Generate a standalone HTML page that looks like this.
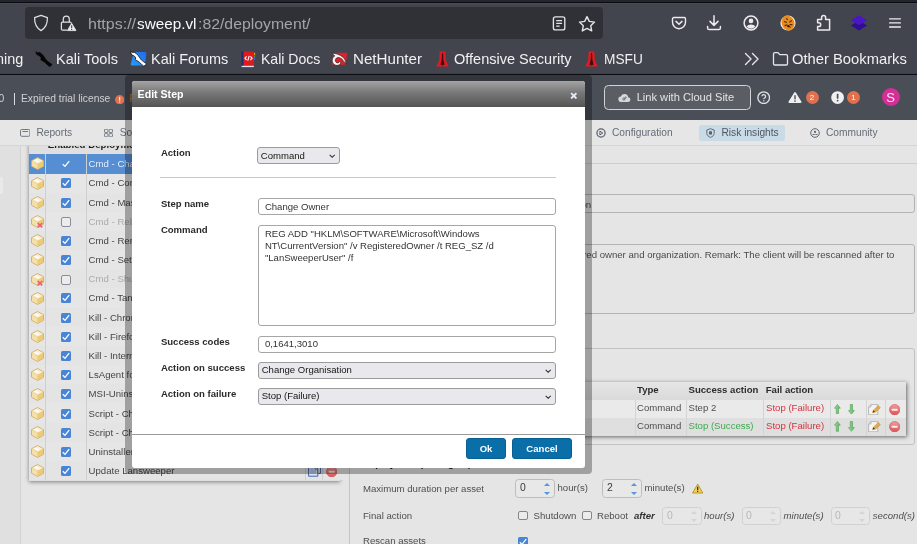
<!DOCTYPE html>
<html lang="en">
<head>
<meta charset="utf-8">
<title>Edit Step</title>
<style>
*{box-sizing:border-box;margin:0;padding:0}
html,body{width:917px;height:544px;overflow:hidden;background:#e5e5e5;font-family:"Liberation Sans",sans-serif;}
.a{position:absolute;white-space:nowrap}
#chrome{left:0;top:0;width:917px;height:75px;background:linear-gradient(#42454d 73px,#383b42 74px)}
#topstrip{left:0;top:0;width:917px;height:4px;background:linear-gradient(#23252e 0,#23252e 1.9px,#0a0b0f 2px,#0a0b0f 3px,#494c55 3px,#494c55 4px)}
#chromeline{left:0;top:74px;width:917px;height:1px;background:#0c0d11}
#urlbar{left:25px;top:7px;width:578px;height:32px;background:#303136;border-radius:4px}
.bm{color:#f1f1f3;font-size:15px;line-height:20px;top:49px;display:inline-block;transform-origin:0 0}
.url{font-size:15.5px;line-height:20px;top:13.5px;display:inline-block;transform-origin:0 0}
#hdr{left:0;top:75px;width:917px;height:45px;background:#4a4e56}
#nav{left:0;top:120px;width:917px;height:26px;background:#e6e6e6;border-bottom:1px solid #d6d6d6}
.nv{font-size:10.2px;color:#656c77;top:126.4px;line-height:14px}
.hd{font-size:10.3px;line-height:14px;top:92px;color:#d0d1d5}
.inpd{border:1px solid #b3b3b3;border-radius:3px;background:#e5e5e5}
.t10d{font-size:9.6px;line-height:12px;color:#4a4a4a}
.vs{top:399.5px;width:1px;height:36.5px;background:#d4d4d4}
.th{font-size:9.6px;font-weight:bold;color:#2c2c2c;top:384px;line-height:12px}
.td{font-size:9.6px;color:#4f4f4f;line-height:12px}
.num{width:39.4px;height:19px;border:1px solid #bdbdbd;border-radius:3.5px;background:#e8e8e8}
.num::before{content:"";position:absolute;right:3.6px;top:3.4px;border:3px solid transparent;border-bottom:3.4px solid #5596dc;border-top:0}
.num::after{content:"";position:absolute;right:3.6px;bottom:2.4px;border:3px solid transparent;border-top:3.4px solid #5596dc;border-bottom:0}
.num.dis{border-color:#d0d0d0;background:#e7e7e7;height:17.6px}
.num.dis::before{top:3px}.num.dis::after{bottom:2.2px}
.num.dis::before{border-bottom-color:#d0d6e0}.num.dis::after{border-top-color:#d0d6e0}
.cb{width:9.6px;height:9.6px;border:1px solid #85858f;border-radius:2px;background:#ececec}
/* left table */
.row{left:29px;width:321px;height:19.2px}
.cell{top:0;height:100%}
.t11{font-size:9.6px;color:#454545}
/* dialog */
#shadow{z-index:5;left:125px;top:75px;width:467px;height:399px;background:rgba(0,0,0,.3);border-radius:4px}
#dlg{z-index:6;left:132px;top:81px;width:453px;height:387px;background:#fff;border-radius:3px;overflow:hidden}
#dtitle{left:0;top:0;width:453px;height:26px;background:linear-gradient(#a4a4a4,#777 45%,#555);}
.lbl{font-size:9.55px;font-weight:bold;color:#2a2a2a;line-height:12px}
.it{font-size:9.55px;color:#333;line-height:12px}
.st{font-size:9.55px;color:#151515;line-height:12px}
.inp{border:1px solid #a6a6a6;border-radius:3px;background:#fff;font-size:10px;color:#222}
.sel{border:1px solid #9b9b9b;border-radius:3px;background:#e9e9ed;font-size:10px;color:#111}
.btn{background:#0a6ea9;border:1px solid #085f92;border-radius:3px;color:#fff;font-weight:bold;font-size:9.55px;text-align:center;line-height:20.4px;height:20.8px}
</style>
</head>
<body>
<div id="root" style="position:absolute;left:0;top:0;width:917px;height:544px;will-change:transform">
<!-- ===== browser chrome ===== -->
<div class="a" id="chrome"></div>
<div class="a" id="topstrip"></div>
<div class="a" id="urlbar"></div>
<div class="a" id="chromeline"></div>
<!-- shield -->
<svg class="a" style="left:33px;top:14px" width="16" height="18" viewBox="0 0 16 18"><path d="M8 1.4 L14.4 3.6 C14.6 9.5 12.6 14 8 16.6 C3.4 14 1.4 9.5 1.6 3.6 Z" fill="none" stroke="#dedee3" stroke-width="1.25" stroke-linejoin="round"/></svg>
<!-- lock with warning -->
<svg class="a" style="left:60px;top:14px" width="18" height="18" viewBox="0 0 18 18"><path d="M3.3 8 V5 a3 3 0 0 1 6 0 V8" fill="none" stroke="#dedee3" stroke-width="1.25"/><path d="M7 16.2 H2.6 a1.2 1.2 0 0 1 -1.2 -1.2 V9.2 a1.2 1.2 0 0 1 1.2 -1.2 H10 a1.2 1.2 0 0 1 1.2 1.2" fill="none" stroke="#dedee3" stroke-width="1.25"/><path d="M11.7 9.3 L16 16.6 H7.4 Z" fill="#ededf0" stroke="#ededf0" stroke-width="0.8" stroke-linejoin="round"/><rect x="11.2" y="11.3" width="1" height="3" fill="#303136"/><rect x="11.2" y="15" width="1" height="1" fill="#303136"/></svg>
<span class="a url" id="u1" style="left:88px;transform:scaleX(1.0323);color:#a3a3ab">https://</span>
<span class="a url" id="u2" style="left:137.4px;transform:scaleX(0.9867);color:#fbfbfe">sweep.vl</span>
<span class="a url" id="u3" style="left:197.8px;transform:scaleX(1.0199);color:#a3a3ab">:82/deployment/</span>
<!-- reader -->
<svg class="a" style="left:551px;top:14px" width="16" height="18" viewBox="0 0 16 18"><rect x="2.4" y="2.9" width="11.4" height="13" rx="2" fill="none" stroke="#e4e4e8" stroke-width="1.35"/><path d="M5.2 6.7 H11 M5.2 9.4 H11 M5.2 12.1 H8.6" stroke="#e4e4e8" stroke-width="1.2"/></svg>
<!-- star -->
<svg class="a" style="left:578px;top:14.6px" width="18" height="18" viewBox="0 0 18 18"><path d="M9 1.6 L11.3 6.4 L16.5 7.1 L12.7 10.7 L13.7 15.9 L9 13.4 L4.3 15.9 L5.3 10.7 L1.5 7.1 L6.7 6.4 Z" fill="none" stroke="#e4e4e8" stroke-width="1.4" stroke-linejoin="round"/></svg>
<!-- pocket -->
<svg class="a" style="left:670px;top:14.2px" width="18" height="18" viewBox="0 0 18 18"><path d="M3.8 3.5 H14.2 a1.3 1.3 0 0 1 1.3 1.3 V8.2 a6.5 6.5 0 0 1 -13 0 V4.8 A1.3 1.3 0 0 1 3.8 3.5 Z" fill="none" stroke="#ececf0" stroke-width="1.4"/><path d="M6 7.4 L9 10.2 L12 7.4" fill="none" stroke="#ececf0" stroke-width="1.5" stroke-linecap="round" stroke-linejoin="round"/></svg>
<!-- download -->
<svg class="a" style="left:705.2px;top:13.6px" width="18" height="18" viewBox="0 0 18 18"><path d="M9 1.8 V11 M5 7.4 L9 11.4 L13 7.4" fill="none" stroke="#ececf0" stroke-width="1.5" stroke-linecap="round" stroke-linejoin="round"/><path d="M2.6 12.6 V14 a1.6 1.6 0 0 0 1.6 1.6 H13.8 a1.6 1.6 0 0 0 1.6 -1.6 V12.6" fill="none" stroke="#ececf0" stroke-width="1.5" stroke-linecap="round"/></svg>
<!-- account -->
<svg class="a" style="left:742.4px;top:14.4px" width="18" height="18" viewBox="0 0 18 18"><circle cx="9" cy="9" r="6.9" fill="none" stroke="#ececf0" stroke-width="1.5"/><circle cx="9" cy="6.9" r="2.3" fill="#ececf0"/><path d="M4.6 12.6 a4.8 3.4 0 0 1 8.8 0 a5.6 5.6 0 0 1 -8.8 0 Z" fill="#ececf0"/></svg>
<!-- tiger / fox extension -->
<svg class="a" style="left:779.6px;top:15.4px" width="16" height="16" viewBox="0 0 16 16"><circle cx="8" cy="8" r="7.6" fill="#f2e6d6"/><path d="M8 .4 A7.6 7.6 0 0 1 8 15.6 A7.6 7.6 0 0 1 8 .4 Z" fill="#e98a1c" transform="rotate(-20 8 8) scale(.82 1) translate(1.75 0)"/><path d="M4 6.4 L7 7.6 M12 5.4 L9.4 7.2 M4.6 10.6 L7.4 9.8 M12.4 9.6 L9.6 9.6 M6.4 3.4 L7.6 5 M10.4 12.6 L9.2 11.2" stroke="#4a2a10" stroke-width="1.1"/><circle cx="8.2" cy="11.2" r="1.1" fill="#2b1708"/></svg>
<!-- puzzle -->
<svg class="a" style="left:815px;top:13.4px" width="18" height="19" viewBox="0 0 18 19"><path d="M2.6 6.6 H6.6 V4.6 a2 2 0 0 1 4 0 V6.6 H14.6 V17 H2.6 V13.6 H3.8 a1.9 1.9 0 0 0 0 -3.8 H2.6 Z" fill="none" stroke="#ececf0" stroke-width="1.5" stroke-linejoin="round"/></svg>
<!-- purple layers -->
<svg class="a" style="left:849px;top:13px" width="20" height="20" viewBox="0 0 20 20"><path d="M10 7.5 L18 12.4 L10 17.4 L2 12.4 Z" fill="#2d0f8f"/><path d="M10 2.2 L18 7.2 L10 12.2 L2 7.2 Z" fill="#4a16c8"/></svg>
<!-- hamburger -->
<svg class="a" style="left:887px;top:15px" width="16" height="16" viewBox="0 0 16 16"><path d="M2.6 3.8 H13.4 M2.6 7.9 H13.4 M2.6 12 H13.4" stroke="#ececf0" stroke-width="1.35" stroke-linecap="round"/></svg>

<span class="a bm" id="b0" style="left:-4px;transform:scaleX(0.9613)">ning</span>
<span class="a bm" id="b1" style="left:56.3px;transform:scaleX(0.9687)">Kali Tools</span>
<span class="a bm" id="b2" style="left:151px;transform:scaleX(0.9650)">Kali Forums</span>
<span class="a bm" id="b3" style="left:260.5px;transform:scaleX(0.9369)">Kali Docs</span>
<span class="a bm" id="b4" style="left:352.7px;transform:scaleX(1.0088)">NetHunter</span>
<span class="a bm" id="b5" style="left:454.3px;transform:scaleX(0.9679)">Offensive Security</span>
<span class="a bm" id="b6" style="left:603.9px;transform:scaleX(0.9129)">MSFU</span>
<span class="a bm" id="b7" style="left:792.4px;transform:scaleX(0.9837)">Other Bookmarks</span>
<!-- bookmark icons -->
<svg class="a" style="left:35px;top:50px" width="18" height="18" viewBox="0 0 18 18"><path d="M.7 .9 L2.4 2.4 L4.3 2.1 L6.3 3.3 L8.6 5.6 L10.2 8 L12 10.4 L14.4 12.3 L17.2 14.2 L16.3 16 L14.2 16.8 L12.2 15 L9.6 12.6 L7.3 11.1 L5.2 9.7 L6 8.1 L4.5 6.2 L2.7 5.3 L1 4.2 Z" fill="#050506" stroke="#2a2b30" stroke-width=".3"/></svg>
<svg class="a" style="left:130px;top:50px" width="18" height="18" viewBox="0 0 18 18"><defs><linearGradient id="kf" x1="0" y1="1" x2="1" y2="0"><stop offset="0" stop-color="#2b9cf6"/><stop offset="1" stop-color="#1d6bef"/></linearGradient></defs><path d="M5.2 1.9 H15.2 a1.2 1.2 0 0 1 1.2 1.4 L15 14.2 a1.4 1.4 0 0 1 -1.4 1.2 H2 a1.2 1.2 0 0 1 -1.2 -1.5 L3.6 3.1 A1.6 1.6 0 0 1 5.2 1.9 Z" fill="url(#kf)"/><g transform="translate(.2 .3) scale(.94)"><path d="M.7 .9 L2.4 2.4 L4.3 2.1 L6.3 3.3 L8.6 5.6 L10.2 8 L12 10.4 L14.4 12.3 L17.2 14.2 L16.3 16 L14.2 16.8 L12.2 15 L9.6 12.6 L7.3 11.1 L5.2 9.7 L6 8.1 L4.5 6.2 L2.7 5.3 L1 4.2 Z" fill="#fff" stroke="#15161a" stroke-width=".9" stroke-linejoin="round"/></g></svg>
<svg class="a" style="left:241.4px;top:50.6px" width="15" height="17" viewBox="0 0 15 17"><rect x=".4" y=".4" width="12.6" height="15.6" rx="1" fill="#e0191d"/><rect x=".4" y=".4" width="2" height="15.2" fill="#1d2a6e"/><rect x=".6" y="14.8" width="12.2" height="1.3" fill="#e6e3f2"/><rect x="13" y="1.8" width="1.2" height="2.2" fill="#f08a1c"/><rect x="13" y="4.4" width="1.2" height="2.2" fill="#3c9a4a"/><rect x="13" y="7" width="1.2" height="2.2" fill="#2e62d8"/><path d="M5.6 5.4 L3.9 7.2 L5.6 9 M9.4 5.4 L11.1 7.2 L9.4 9 M8.2 4.8 L6.8 9.6" fill="none" stroke="#fff" stroke-width="1.1"/></svg>
<svg class="a" style="left:331.4px;top:51.6px" width="17" height="15" viewBox="0 0 17 15"><path d="M4.2 .7 H15 a1.2 1.2 0 0 1 1.2 1.4 L14.8 11.6 a1.4 1.4 0 0 1 -1.4 1.2 H2 a1.2 1.2 0 0 1 -1.2 -1.5 L2.8 1.9 A1.5 1.5 0 0 1 4.2 .7 Z" fill="#d9222b"/><path d="M1 1.2 C5.5 1.4 10.5 3 13.6 7 L15.4 11.6 L12.6 9.4 C11.4 6.6 8.6 5.2 6.6 5.6 C4.4 6 3.6 8.6 5 10.2 C6.2 11.4 8 11 8.4 9.6 L9.8 10.8 C9 13.4 5.6 14.2 3.2 12.4 C.4 10.2 .6 5.6 3.8 4 C2.6 2.8 1.8 2 1 1.2 Z" fill="#f4f4f4" stroke="#2a1416" stroke-width=".6" stroke-linejoin="round"/></svg>
<svg class="a" style="left:435.6px;top:51.4px" width="13" height="16" viewBox="0 0 13 16"><path d="M3.6 .6 H9.4 L9.8 9.4 L12.8 15.4 H.2 L3.2 9.4 Z" fill="#e01b24"/><path d="M6 2 L7.1 2.2 L7.4 9 L8.6 13.6 L6.5 14.6 L4.4 13.6 L5.6 9 Z" fill="#4a0a0e"/></svg>
<svg class="a" style="left:585px;top:51.4px" width="13" height="16" viewBox="0 0 13 16"><path d="M3.6 .6 H9.4 L9.8 9.4 L12.8 15.4 H.2 L3.2 9.4 Z" fill="#e01b24"/><path d="M6 2 L7.1 2.2 L7.4 9 L8.6 13.6 L6.5 14.6 L4.4 13.6 L5.6 9 Z" fill="#4a0a0e"/></svg>
<!-- chevrons -->
<svg class="a" style="left:744px;top:52px" width="16" height="14" viewBox="0 0 16 14"><path d="M1.5 1.5 L7 7 L1.5 12.5 M8.5 1.5 L14 7 L8.5 12.5" fill="none" stroke="#e6e6ea" stroke-width="1.4" stroke-linecap="round" stroke-linejoin="round"/></svg>
<!-- folder -->
<svg class="a" style="left:772px;top:51px" width="17" height="16" viewBox="0 0 17 16"><path d="M1.5 3 a1.3 1.3 0 0 1 1.3 -1.3 H6 L7.8 3.6 H14.2 a1.3 1.3 0 0 1 1.3 1.3 V12.7 a1.3 1.3 0 0 1 -1.3 1.3 H2.8 a1.3 1.3 0 0 1 -1.3 -1.3 Z" fill="none" stroke="#e6e6ea" stroke-width="1.3" stroke-linejoin="round"/></svg>

<!-- ===== page header ===== -->
<svg width="0" height="0" style="position:absolute"><defs><linearGradient id="gb" x1="0" y1="0" x2="1" y2="1"><stop offset="0" stop-color="#f6e8c0"/><stop offset=".55" stop-color="#eed597"/><stop offset="1" stop-color="#dfb965"/></linearGradient><linearGradient id="gg" x1="0" y1="0" x2="1" y2="0"><stop offset="0" stop-color="#a8dba4"/><stop offset="1" stop-color="#5cb45c"/></linearGradient><linearGradient id="gr" x1="0" y1="0" x2="0" y2="1"><stop offset="0" stop-color="#f09c9c"/><stop offset="1" stop-color="#dc5257"/></linearGradient></defs></svg>
<div class="a" id="hdr"></div>
<span class="a hd" style="left:-1.5px">0</span>
<div class="a" style="left:13.8px;top:93px;width:1.2px;height:12px;background:#d9dadd"></div>
<span class="a hd" id="h1" style="left:21px">Expired trial license</span>
<svg class="a" style="left:114.8px;top:94.8px" width="9.4" height="9.4" viewBox="0 0 10 10"><circle cx="5" cy="5" r="5" fill="#e0714f"/><rect x="4.45" y="2" width="1.1" height="3.9" fill="#fff"/><rect x="4.45" y="6.8" width="1.1" height="1.2" fill="#fff"/></svg>
<span class="a hd" style="left:129.5px;color:#d8892b">Please contact sales</span>
<!-- link with cloud site -->
<div class="a" style="left:604px;top:85px;width:147px;height:25px;border:1px solid #d2d3d6;border-radius:4.5px;background:#5a5d63"></div>
<svg class="a" style="left:618px;top:92px" width="13" height="11" viewBox="0 0 13 11"><path d="M3.2 10 a2.7 2.7 0 0 1 -0.3 -5.4 a3.8 3.8 0 0 1 7.3 0.6 a2.4 2.4 0 0 1 -0.4 4.8 Z" fill="#d6d7da"/><path d="M6.5 7.2 l1.8 -1.8 M8.3 5.4 a1.1 1.1 0 0 0 -1.6 0" stroke="#5a5d63" stroke-width=".9" fill="none"/><circle cx="5.9" cy="7" r="1.1" fill="none" stroke="#5a5d63" stroke-width=".8"/></svg>
<span class="a" id="h2" style="left:636.7px;top:90px;font-size:11.1px;line-height:15px;color:#e2e3e6">Link with Cloud Site</span>
<svg class="a" style="left:757px;top:91px" width="13.4" height="13.4" viewBox="0 0 14 14"><circle cx="7" cy="7" r="6.1" fill="none" stroke="#e0e1e4" stroke-width="1.4"/><path d="M5.2 5.6 a1.9 1.9 0 1 1 2.7 1.7 c-.6 .3 -.8 .6 -.8 1.2" fill="none" stroke="#e0e1e4" stroke-width="1.3"/><rect x="6.4" y="9.6" width="1.3" height="1.3" fill="#d6d7da"/></svg>
<svg class="a" style="left:788.4px;top:90.6px" width="14" height="13" viewBox="0 0 14 13"><path d="M7 2 L12.6 11 H1.4 Z" fill="#f0f0f1" stroke="#f0f0f1" stroke-width="1.8" stroke-linejoin="round"/><rect x="6.3" y="4.2" width="1.4" height="4.2" fill="#4a4e56"/><rect x="6.3" y="9.4" width="1.4" height="1.4" fill="#4a4e56"/></svg>
<div class="a" style="left:805.7px;top:91px;width:13px;height:13px;border-radius:50%;background:#e0714f"></div>
<span class="a" style="left:809.7px;top:93px;font-size:8px;line-height:9px;color:#fff">2</span>
<svg class="a" style="left:831.2px;top:90.6px" width="13.2" height="13.2" viewBox="0 0 14 14"><circle cx="7" cy="7" r="6.8" fill="#f0f0f1"/><rect x="6.1" y="2.8" width="1.8" height="5.4" rx=".5" fill="#4a4e56"/><rect x="6.1" y="9.4" width="1.8" height="1.8" rx=".5" fill="#4a4e56"/></svg>
<div class="a" style="left:847px;top:91px;width:13px;height:13px;border-radius:50%;background:#e0714f"></div>
<span class="a" style="left:851.2px;top:93px;font-size:8px;line-height:9px;color:#fff">1</span>
<div class="a" style="left:881.6px;top:87.5px;width:18px;height:18px;border-radius:50%;background:#d42f96"></div>
<span class="a" style="left:886.3px;top:89.5px;font-size:13px;line-height:15px;color:#f6e6f0">S</span>

<!-- nav -->
<div class="a" id="nav"></div>
<svg class="a" style="left:19.8px;top:128.8px" width="10.4" height="8" viewBox="0 0 10.4 8"><rect x=".5" y=".5" width="9.4" height="6.8" rx="1.2" fill="none" stroke="#707782" stroke-width="1"/><path d="M2.4 2.5 H8" stroke="#707782" stroke-width="1"/></svg>
<span class="a nv" id="n1" style="left:36.4px">Reports</span>
<svg class="a" style="left:104.2px;top:128.5px" width="9" height="8.6" viewBox="0 0 9 8.6"><g fill="none" stroke="#707782" stroke-width=".9"><rect x=".5" y=".3" width="3.4" height="3.2" rx=".6"/><rect x="5.1" y=".3" width="3.4" height="3.2" rx=".6"/><rect x=".5" y="4.6" width="3.4" height="3.2" rx=".6"/><rect x="5.1" y="4.6" width="3.4" height="3.2" rx=".6"/></g></svg>
<span class="a nv" id="n2" style="left:119.8px">Software</span>
<svg class="a" style="left:596px;top:127.7px" width="10" height="10" viewBox="0 0 10 10"><circle cx="5" cy="5" r="4.1" fill="none" stroke="#5a616c" stroke-width="1.25"/><path d="M3.9 3.1 L6.8 5 L3.9 6.9 Z" fill="none" stroke="#5a616c" stroke-width="1" stroke-linejoin="round"/></svg>
<span class="a nv" id="n3" style="left:612px">Configuration</span>
<div class="a" style="left:699px;top:125px;width:85.5px;height:15.5px;background:#c9dbe6;border-radius:2px"></div>
<svg class="a" style="left:706px;top:127.8px" width="9" height="10" viewBox="0 0 9 10"><path d="M4.5 .7 L8.2 2 V5.2 C8.2 7.3 6.5 8.7 4.5 9.4 C2.5 8.7 .8 7.3 .8 5.2 V2 Z" fill="none" stroke="#56616e" stroke-width=".9"/><rect x="3" y="3.2" width="3" height="3.4" rx=".6" fill="#56616e"/></svg>
<span class="a nv" id="n4" style="left:721.5px;color:#4d5661">Risk insights</span>
<svg class="a" style="left:809.8px;top:128px" width="10" height="10" viewBox="0 0 10 10"><circle cx="5" cy="5" r="4.3" fill="none" stroke="#5e6570" stroke-width="1"/><circle cx="5" cy="3.9" r="1.1" fill="#5e6570"/><path d="M2.2 6.9 a1.3 1.3 0 0 1 2.3 -.4 a1 1 0 0 1 1 0 a1.3 1.3 0 0 1 2.3 .4 Z" fill="#5e6570"/></svg>
<span class="a nv" id="n5" style="left:826px">Community</span>

<!-- left sidebar strips -->
<div class="a" style="left:0;top:146px;width:20.5px;height:398px;background:#e0e0e0;border-right:1px solid #d3d3d3"></div>
<div class="a" style="left:0;top:177px;width:2.5px;height:17px;background:#e9e9e9;border-radius:0 2px 2px 0"></div>
<!-- left table -->
<div class="a" style="left:29px;top:134px;width:311px;height:347px;background:#dfdfdf;box-shadow:0 1px 4px rgba(0,0,0,.45);clip-path:inset(12px -10px -10px -10px)"></div>
<span class="a" style="left:47.8px;top:139.1px;font-size:9.7px;font-weight:bold;color:#1c1c1c;line-height:12px;clip-path:inset(6.9px 0 0 0)">Enabled Deployment packages</span>
<div class="a row" style="top:154px;height:19.7px;background:#568ed4;z-index:1"><svg class="a" style="left:2px;top:3.4px" width="13.2" height="13" viewBox="0 0 13.2 13"><path d="M6.6 .6 L12.6 3.8 V9.2 L6.6 12.4 L.6 9.2 V3.8 Z" fill="#f4e5bc" stroke="#d3ad62" stroke-width="1" stroke-linejoin="round"/><path d="M6.6 6.9 L12.1 4.2 V8.9 L6.6 11.8 Z" fill="#eecb72"/><path d="M6.6 6.9 L1.1 4.2 V8.9 L6.6 11.8 Z" fill="#f3e0ad"/><path d="M6.6 1.2 L12 4 L6.6 6.8 L1.2 4 Z" fill="#f8efd6"/><path d="M4.6 2.6 L9 4.9 L7.6 5.7 L3.2 3.4 Z" fill="#fffdf6"/><path d="M6.6 6.9 V11.8 M1.2 4.1 L6.6 6.9 L12 4.1" fill="none" stroke="#e3c27c" stroke-width=".5"/></svg><div class="a" style="left:16px;top:0;width:1px;height:100%;background:#cfcfcf"></div><div class="a" style="left:57px;top:0;width:1px;height:100%;background:#cfcfcf"></div><svg class="a" style="left:32px;top:5.1px" width="10" height="10" viewBox="0 0 10 10"><path d="M1.8 5.2 L4 7.4 L8.2 2.2" fill="none" stroke="#fff" stroke-width="1.3"/></svg><span class="a t11" style="left:59.6px;top:3.1px;line-height:13px;color:#e8eef8">Cmd - Change Owner/Organisation</span></div>
<div class="a row" style="top:173.37px;background:#e6e6e6"><svg class="a" style="left:2px;top:3.4px" width="13.2" height="13" viewBox="0 0 13.2 13"><path d="M6.6 .6 L12.6 3.8 V9.2 L6.6 12.4 L.6 9.2 V3.8 Z" fill="#f4e5bc" stroke="#d3ad62" stroke-width="1" stroke-linejoin="round"/><path d="M6.6 6.9 L12.1 4.2 V8.9 L6.6 11.8 Z" fill="#eecb72"/><path d="M6.6 6.9 L1.1 4.2 V8.9 L6.6 11.8 Z" fill="#f3e0ad"/><path d="M6.6 1.2 L12 4 L6.6 6.8 L1.2 4 Z" fill="#f8efd6"/><path d="M4.6 2.6 L9 4.9 L7.6 5.7 L3.2 3.4 Z" fill="#fffdf6"/><path d="M6.6 6.9 V11.8 M1.2 4.1 L6.6 6.9 L12 4.1" fill="none" stroke="#e3c27c" stroke-width=".5"/></svg><div class="a" style="left:16px;top:0;width:1px;height:100%;background:#cfcfcf"></div><div class="a" style="left:57px;top:0;width:1px;height:100%;background:#cfcfcf"></div><svg class="a" style="left:32px;top:5.1px" width="10" height="10" viewBox="0 0 10 10"><rect width="10" height="10" rx="1.6" fill="#4985d6"/><path d="M1.8 5.2 L4 7.4 L8.2 2.2" fill="none" stroke="#fff" stroke-width="1.3"/></svg><span class="a t11" style="left:59.6px;top:3.1px;line-height:13px;color:#454545">Cmd - Configure Windows firewall</span></div>
<div class="a row" style="top:192.54px;background:#e4e4e4"><svg class="a" style="left:2px;top:3.4px" width="13.2" height="13" viewBox="0 0 13.2 13"><path d="M6.6 .6 L12.6 3.8 V9.2 L6.6 12.4 L.6 9.2 V3.8 Z" fill="#f4e5bc" stroke="#d3ad62" stroke-width="1" stroke-linejoin="round"/><path d="M6.6 6.9 L12.1 4.2 V8.9 L6.6 11.8 Z" fill="#eecb72"/><path d="M6.6 6.9 L1.1 4.2 V8.9 L6.6 11.8 Z" fill="#f3e0ad"/><path d="M6.6 1.2 L12 4 L6.6 6.8 L1.2 4 Z" fill="#f8efd6"/><path d="M4.6 2.6 L9 4.9 L7.6 5.7 L3.2 3.4 Z" fill="#fffdf6"/><path d="M6.6 6.9 V11.8 M1.2 4.1 L6.6 6.9 L12 4.1" fill="none" stroke="#e3c27c" stroke-width=".5"/></svg><div class="a" style="left:16px;top:0;width:1px;height:100%;background:#cfcfcf"></div><div class="a" style="left:57px;top:0;width:1px;height:100%;background:#cfcfcf"></div><svg class="a" style="left:32px;top:5.1px" width="10" height="10" viewBox="0 0 10 10"><rect width="10" height="10" rx="1.6" fill="#4985d6"/><path d="M1.8 5.2 L4 7.4 L8.2 2.2" fill="none" stroke="#fff" stroke-width="1.3"/></svg><span class="a t11" style="left:59.6px;top:3.1px;line-height:13px;color:#454545">Cmd - Mass rename</span></div>
<div class="a row" style="top:211.71px;background:#e6e6e6"><svg class="a" style="left:2px;top:3.4px" width="13.2" height="13" viewBox="0 0 13.2 13"><path d="M6.6 .6 L12.6 3.8 V9.2 L6.6 12.4 L.6 9.2 V3.8 Z" fill="#f4e5bc" stroke="#d3ad62" stroke-width="1" stroke-linejoin="round"/><path d="M6.6 6.9 L12.1 4.2 V8.9 L6.6 11.8 Z" fill="#eecb72"/><path d="M6.6 6.9 L1.1 4.2 V8.9 L6.6 11.8 Z" fill="#f3e0ad"/><path d="M6.6 1.2 L12 4 L6.6 6.8 L1.2 4 Z" fill="#f8efd6"/><path d="M4.6 2.6 L9 4.9 L7.6 5.7 L3.2 3.4 Z" fill="#fffdf6"/><path d="M6.6 6.9 V11.8 M1.2 4.1 L6.6 6.9 L12 4.1" fill="none" stroke="#e3c27c" stroke-width=".5"/><path d="M6.8 8 L11.2 12.4 M11.2 8 L6.8 12.4" stroke="#e6607a" stroke-width="1.6"/></svg><div class="a" style="left:16px;top:0;width:1px;height:100%;background:#cfcfcf"></div><div class="a" style="left:57px;top:0;width:1px;height:100%;background:#cfcfcf"></div><div class="a" style="left:32px;top:5.4px;width:10px;height:10px;border:1px solid #8c8c9c;border-radius:2px;background:#ececec"></div><span class="a t11" style="left:59.6px;top:3.1px;line-height:13px;color:#ababab">Cmd - Reboot</span></div>
<div class="a row" style="top:230.88px;background:#e4e4e4"><svg class="a" style="left:2px;top:3.4px" width="13.2" height="13" viewBox="0 0 13.2 13"><path d="M6.6 .6 L12.6 3.8 V9.2 L6.6 12.4 L.6 9.2 V3.8 Z" fill="#f4e5bc" stroke="#d3ad62" stroke-width="1" stroke-linejoin="round"/><path d="M6.6 6.9 L12.1 4.2 V8.9 L6.6 11.8 Z" fill="#eecb72"/><path d="M6.6 6.9 L1.1 4.2 V8.9 L6.6 11.8 Z" fill="#f3e0ad"/><path d="M6.6 1.2 L12 4 L6.6 6.8 L1.2 4 Z" fill="#f8efd6"/><path d="M4.6 2.6 L9 4.9 L7.6 5.7 L3.2 3.4 Z" fill="#fffdf6"/><path d="M6.6 6.9 V11.8 M1.2 4.1 L6.6 6.9 L12 4.1" fill="none" stroke="#e3c27c" stroke-width=".5"/></svg><div class="a" style="left:16px;top:0;width:1px;height:100%;background:#cfcfcf"></div><div class="a" style="left:57px;top:0;width:1px;height:100%;background:#cfcfcf"></div><svg class="a" style="left:32px;top:5.1px" width="10" height="10" viewBox="0 0 10 10"><rect width="10" height="10" rx="1.6" fill="#4985d6"/><path d="M1.8 5.2 L4 7.4 L8.2 2.2" fill="none" stroke="#fff" stroke-width="1.3"/></svg><span class="a t11" style="left:59.6px;top:3.1px;line-height:13px;color:#454545">Cmd - Rename computer</span></div>
<div class="a row" style="top:250.05px;background:#e6e6e6"><svg class="a" style="left:2px;top:3.4px" width="13.2" height="13" viewBox="0 0 13.2 13"><path d="M6.6 .6 L12.6 3.8 V9.2 L6.6 12.4 L.6 9.2 V3.8 Z" fill="#f4e5bc" stroke="#d3ad62" stroke-width="1" stroke-linejoin="round"/><path d="M6.6 6.9 L12.1 4.2 V8.9 L6.6 11.8 Z" fill="#eecb72"/><path d="M6.6 6.9 L1.1 4.2 V8.9 L6.6 11.8 Z" fill="#f3e0ad"/><path d="M6.6 1.2 L12 4 L6.6 6.8 L1.2 4 Z" fill="#f8efd6"/><path d="M4.6 2.6 L9 4.9 L7.6 5.7 L3.2 3.4 Z" fill="#fffdf6"/><path d="M6.6 6.9 V11.8 M1.2 4.1 L6.6 6.9 L12 4.1" fill="none" stroke="#e3c27c" stroke-width=".5"/></svg><div class="a" style="left:16px;top:0;width:1px;height:100%;background:#cfcfcf"></div><div class="a" style="left:57px;top:0;width:1px;height:100%;background:#cfcfcf"></div><svg class="a" style="left:32px;top:5.1px" width="10" height="10" viewBox="0 0 10 10"><rect width="10" height="10" rx="1.6" fill="#4985d6"/><path d="M1.8 5.2 L4 7.4 L8.2 2.2" fill="none" stroke="#fff" stroke-width="1.3"/></svg><span class="a t11" style="left:59.6px;top:3.1px;line-height:13px;color:#454545">Cmd - Set wallpaper</span></div>
<div class="a row" style="top:269.22px;background:#e4e4e4"><svg class="a" style="left:2px;top:3.4px" width="13.2" height="13" viewBox="0 0 13.2 13"><path d="M6.6 .6 L12.6 3.8 V9.2 L6.6 12.4 L.6 9.2 V3.8 Z" fill="#f4e5bc" stroke="#d3ad62" stroke-width="1" stroke-linejoin="round"/><path d="M6.6 6.9 L12.1 4.2 V8.9 L6.6 11.8 Z" fill="#eecb72"/><path d="M6.6 6.9 L1.1 4.2 V8.9 L6.6 11.8 Z" fill="#f3e0ad"/><path d="M6.6 1.2 L12 4 L6.6 6.8 L1.2 4 Z" fill="#f8efd6"/><path d="M4.6 2.6 L9 4.9 L7.6 5.7 L3.2 3.4 Z" fill="#fffdf6"/><path d="M6.6 6.9 V11.8 M1.2 4.1 L6.6 6.9 L12 4.1" fill="none" stroke="#e3c27c" stroke-width=".5"/><path d="M6.8 8 L11.2 12.4 M11.2 8 L6.8 12.4" stroke="#e6607a" stroke-width="1.6"/></svg><div class="a" style="left:16px;top:0;width:1px;height:100%;background:#cfcfcf"></div><div class="a" style="left:57px;top:0;width:1px;height:100%;background:#cfcfcf"></div><div class="a" style="left:32px;top:5.4px;width:10px;height:10px;border:1px solid #8c8c9c;border-radius:2px;background:#ececec"></div><span class="a t11" style="left:59.6px;top:3.1px;line-height:13px;color:#ababab">Cmd - Shutdown</span></div>
<div class="a row" style="top:288.39px;background:#e6e6e6"><svg class="a" style="left:2px;top:3.4px" width="13.2" height="13" viewBox="0 0 13.2 13"><path d="M6.6 .6 L12.6 3.8 V9.2 L6.6 12.4 L.6 9.2 V3.8 Z" fill="#f4e5bc" stroke="#d3ad62" stroke-width="1" stroke-linejoin="round"/><path d="M6.6 6.9 L12.1 4.2 V8.9 L6.6 11.8 Z" fill="#eecb72"/><path d="M6.6 6.9 L1.1 4.2 V8.9 L6.6 11.8 Z" fill="#f3e0ad"/><path d="M6.6 1.2 L12 4 L6.6 6.8 L1.2 4 Z" fill="#f8efd6"/><path d="M4.6 2.6 L9 4.9 L7.6 5.7 L3.2 3.4 Z" fill="#fffdf6"/><path d="M6.6 6.9 V11.8 M1.2 4.1 L6.6 6.9 L12 4.1" fill="none" stroke="#e3c27c" stroke-width=".5"/></svg><div class="a" style="left:16px;top:0;width:1px;height:100%;background:#cfcfcf"></div><div class="a" style="left:57px;top:0;width:1px;height:100%;background:#cfcfcf"></div><svg class="a" style="left:32px;top:5.1px" width="10" height="10" viewBox="0 0 10 10"><rect width="10" height="10" rx="1.6" fill="#4985d6"/><path d="M1.8 5.2 L4 7.4 L8.2 2.2" fill="none" stroke="#fff" stroke-width="1.3"/></svg><span class="a t11" style="left:59.6px;top:3.1px;line-height:13px;color:#454545">Cmd - Tanium install</span></div>
<div class="a row" style="top:307.56px;background:#e4e4e4"><svg class="a" style="left:2px;top:3.4px" width="13.2" height="13" viewBox="0 0 13.2 13"><path d="M6.6 .6 L12.6 3.8 V9.2 L6.6 12.4 L.6 9.2 V3.8 Z" fill="#f4e5bc" stroke="#d3ad62" stroke-width="1" stroke-linejoin="round"/><path d="M6.6 6.9 L12.1 4.2 V8.9 L6.6 11.8 Z" fill="#eecb72"/><path d="M6.6 6.9 L1.1 4.2 V8.9 L6.6 11.8 Z" fill="#f3e0ad"/><path d="M6.6 1.2 L12 4 L6.6 6.8 L1.2 4 Z" fill="#f8efd6"/><path d="M4.6 2.6 L9 4.9 L7.6 5.7 L3.2 3.4 Z" fill="#fffdf6"/><path d="M6.6 6.9 V11.8 M1.2 4.1 L6.6 6.9 L12 4.1" fill="none" stroke="#e3c27c" stroke-width=".5"/></svg><div class="a" style="left:16px;top:0;width:1px;height:100%;background:#cfcfcf"></div><div class="a" style="left:57px;top:0;width:1px;height:100%;background:#cfcfcf"></div><svg class="a" style="left:32px;top:5.1px" width="10" height="10" viewBox="0 0 10 10"><rect width="10" height="10" rx="1.6" fill="#4985d6"/><path d="M1.8 5.2 L4 7.4 L8.2 2.2" fill="none" stroke="#fff" stroke-width="1.3"/></svg><span class="a t11" style="left:59.6px;top:3.1px;line-height:13px;color:#454545">Kill - Chrome</span></div>
<div class="a row" style="top:326.73px;background:#e6e6e6"><svg class="a" style="left:2px;top:3.4px" width="13.2" height="13" viewBox="0 0 13.2 13"><path d="M6.6 .6 L12.6 3.8 V9.2 L6.6 12.4 L.6 9.2 V3.8 Z" fill="#f4e5bc" stroke="#d3ad62" stroke-width="1" stroke-linejoin="round"/><path d="M6.6 6.9 L12.1 4.2 V8.9 L6.6 11.8 Z" fill="#eecb72"/><path d="M6.6 6.9 L1.1 4.2 V8.9 L6.6 11.8 Z" fill="#f3e0ad"/><path d="M6.6 1.2 L12 4 L6.6 6.8 L1.2 4 Z" fill="#f8efd6"/><path d="M4.6 2.6 L9 4.9 L7.6 5.7 L3.2 3.4 Z" fill="#fffdf6"/><path d="M6.6 6.9 V11.8 M1.2 4.1 L6.6 6.9 L12 4.1" fill="none" stroke="#e3c27c" stroke-width=".5"/></svg><div class="a" style="left:16px;top:0;width:1px;height:100%;background:#cfcfcf"></div><div class="a" style="left:57px;top:0;width:1px;height:100%;background:#cfcfcf"></div><svg class="a" style="left:32px;top:5.1px" width="10" height="10" viewBox="0 0 10 10"><rect width="10" height="10" rx="1.6" fill="#4985d6"/><path d="M1.8 5.2 L4 7.4 L8.2 2.2" fill="none" stroke="#fff" stroke-width="1.3"/></svg><span class="a t11" style="left:59.6px;top:3.1px;line-height:13px;color:#454545">Kill - Firefox</span></div>
<div class="a row" style="top:345.90px;background:#e4e4e4"><svg class="a" style="left:2px;top:3.4px" width="13.2" height="13" viewBox="0 0 13.2 13"><path d="M6.6 .6 L12.6 3.8 V9.2 L6.6 12.4 L.6 9.2 V3.8 Z" fill="#f4e5bc" stroke="#d3ad62" stroke-width="1" stroke-linejoin="round"/><path d="M6.6 6.9 L12.1 4.2 V8.9 L6.6 11.8 Z" fill="#eecb72"/><path d="M6.6 6.9 L1.1 4.2 V8.9 L6.6 11.8 Z" fill="#f3e0ad"/><path d="M6.6 1.2 L12 4 L6.6 6.8 L1.2 4 Z" fill="#f8efd6"/><path d="M4.6 2.6 L9 4.9 L7.6 5.7 L3.2 3.4 Z" fill="#fffdf6"/><path d="M6.6 6.9 V11.8 M1.2 4.1 L6.6 6.9 L12 4.1" fill="none" stroke="#e3c27c" stroke-width=".5"/></svg><div class="a" style="left:16px;top:0;width:1px;height:100%;background:#cfcfcf"></div><div class="a" style="left:57px;top:0;width:1px;height:100%;background:#cfcfcf"></div><svg class="a" style="left:32px;top:5.1px" width="10" height="10" viewBox="0 0 10 10"><rect width="10" height="10" rx="1.6" fill="#4985d6"/><path d="M1.8 5.2 L4 7.4 L8.2 2.2" fill="none" stroke="#fff" stroke-width="1.3"/></svg><span class="a t11" style="left:59.6px;top:3.1px;line-height:13px;color:#454545">Kill - Internet Explorer</span></div>
<div class="a row" style="top:365.07px;background:#e6e6e6"><svg class="a" style="left:2px;top:3.4px" width="13.2" height="13" viewBox="0 0 13.2 13"><path d="M6.6 .6 L12.6 3.8 V9.2 L6.6 12.4 L.6 9.2 V3.8 Z" fill="#f4e5bc" stroke="#d3ad62" stroke-width="1" stroke-linejoin="round"/><path d="M6.6 6.9 L12.1 4.2 V8.9 L6.6 11.8 Z" fill="#eecb72"/><path d="M6.6 6.9 L1.1 4.2 V8.9 L6.6 11.8 Z" fill="#f3e0ad"/><path d="M6.6 1.2 L12 4 L6.6 6.8 L1.2 4 Z" fill="#f8efd6"/><path d="M4.6 2.6 L9 4.9 L7.6 5.7 L3.2 3.4 Z" fill="#fffdf6"/><path d="M6.6 6.9 V11.8 M1.2 4.1 L6.6 6.9 L12 4.1" fill="none" stroke="#e3c27c" stroke-width=".5"/></svg><div class="a" style="left:16px;top:0;width:1px;height:100%;background:#cfcfcf"></div><div class="a" style="left:57px;top:0;width:1px;height:100%;background:#cfcfcf"></div><svg class="a" style="left:32px;top:5.1px" width="10" height="10" viewBox="0 0 10 10"><rect width="10" height="10" rx="1.6" fill="#4985d6"/><path d="M1.8 5.2 L4 7.4 L8.2 2.2" fill="none" stroke="#fff" stroke-width="1.3"/></svg><span class="a t11" style="left:59.6px;top:3.1px;line-height:13px;color:#454545">LsAgent for Windows</span></div>
<div class="a row" style="top:384.24px;background:#e4e4e4"><svg class="a" style="left:2px;top:3.4px" width="13.2" height="13" viewBox="0 0 13.2 13"><path d="M6.6 .6 L12.6 3.8 V9.2 L6.6 12.4 L.6 9.2 V3.8 Z" fill="#f4e5bc" stroke="#d3ad62" stroke-width="1" stroke-linejoin="round"/><path d="M6.6 6.9 L12.1 4.2 V8.9 L6.6 11.8 Z" fill="#eecb72"/><path d="M6.6 6.9 L1.1 4.2 V8.9 L6.6 11.8 Z" fill="#f3e0ad"/><path d="M6.6 1.2 L12 4 L6.6 6.8 L1.2 4 Z" fill="#f8efd6"/><path d="M4.6 2.6 L9 4.9 L7.6 5.7 L3.2 3.4 Z" fill="#fffdf6"/><path d="M6.6 6.9 V11.8 M1.2 4.1 L6.6 6.9 L12 4.1" fill="none" stroke="#e3c27c" stroke-width=".5"/></svg><div class="a" style="left:16px;top:0;width:1px;height:100%;background:#cfcfcf"></div><div class="a" style="left:57px;top:0;width:1px;height:100%;background:#cfcfcf"></div><svg class="a" style="left:32px;top:5.1px" width="10" height="10" viewBox="0 0 10 10"><rect width="10" height="10" rx="1.6" fill="#4985d6"/><path d="M1.8 5.2 L4 7.4 L8.2 2.2" fill="none" stroke="#fff" stroke-width="1.3"/></svg><span class="a t11" style="left:59.6px;top:3.1px;line-height:13px;color:#454545">MSI-Uninstall</span></div>
<div class="a row" style="top:403.41px;background:#e6e6e6"><svg class="a" style="left:2px;top:3.4px" width="13.2" height="13" viewBox="0 0 13.2 13"><path d="M6.6 .6 L12.6 3.8 V9.2 L6.6 12.4 L.6 9.2 V3.8 Z" fill="#f4e5bc" stroke="#d3ad62" stroke-width="1" stroke-linejoin="round"/><path d="M6.6 6.9 L12.1 4.2 V8.9 L6.6 11.8 Z" fill="#eecb72"/><path d="M6.6 6.9 L1.1 4.2 V8.9 L6.6 11.8 Z" fill="#f3e0ad"/><path d="M6.6 1.2 L12 4 L6.6 6.8 L1.2 4 Z" fill="#f8efd6"/><path d="M4.6 2.6 L9 4.9 L7.6 5.7 L3.2 3.4 Z" fill="#fffdf6"/><path d="M6.6 6.9 V11.8 M1.2 4.1 L6.6 6.9 L12 4.1" fill="none" stroke="#e3c27c" stroke-width=".5"/></svg><div class="a" style="left:16px;top:0;width:1px;height:100%;background:#cfcfcf"></div><div class="a" style="left:57px;top:0;width:1px;height:100%;background:#cfcfcf"></div><svg class="a" style="left:32px;top:5.1px" width="10" height="10" viewBox="0 0 10 10"><rect width="10" height="10" rx="1.6" fill="#4985d6"/><path d="M1.8 5.2 L4 7.4 L8.2 2.2" fill="none" stroke="#fff" stroke-width="1.3"/></svg><span class="a t11" style="left:59.6px;top:3.1px;line-height:13px;color:#454545">Script - Change DNS</span></div>
<div class="a row" style="top:422.58px;background:#e4e4e4"><svg class="a" style="left:2px;top:3.4px" width="13.2" height="13" viewBox="0 0 13.2 13"><path d="M6.6 .6 L12.6 3.8 V9.2 L6.6 12.4 L.6 9.2 V3.8 Z" fill="#f4e5bc" stroke="#d3ad62" stroke-width="1" stroke-linejoin="round"/><path d="M6.6 6.9 L12.1 4.2 V8.9 L6.6 11.8 Z" fill="#eecb72"/><path d="M6.6 6.9 L1.1 4.2 V8.9 L6.6 11.8 Z" fill="#f3e0ad"/><path d="M6.6 1.2 L12 4 L6.6 6.8 L1.2 4 Z" fill="#f8efd6"/><path d="M4.6 2.6 L9 4.9 L7.6 5.7 L3.2 3.4 Z" fill="#fffdf6"/><path d="M6.6 6.9 V11.8 M1.2 4.1 L6.6 6.9 L12 4.1" fill="none" stroke="#e3c27c" stroke-width=".5"/></svg><div class="a" style="left:16px;top:0;width:1px;height:100%;background:#cfcfcf"></div><div class="a" style="left:57px;top:0;width:1px;height:100%;background:#cfcfcf"></div><svg class="a" style="left:32px;top:5.1px" width="10" height="10" viewBox="0 0 10 10"><rect width="10" height="10" rx="1.6" fill="#4985d6"/><path d="M1.8 5.2 L4 7.4 L8.2 2.2" fill="none" stroke="#fff" stroke-width="1.3"/></svg><span class="a t11" style="left:59.6px;top:3.1px;line-height:13px;color:#454545">Script - Check disk</span></div>
<div class="a row" style="top:441.75px;background:#e6e6e6"><svg class="a" style="left:2px;top:3.4px" width="13.2" height="13" viewBox="0 0 13.2 13"><path d="M6.6 .6 L12.6 3.8 V9.2 L6.6 12.4 L.6 9.2 V3.8 Z" fill="#f4e5bc" stroke="#d3ad62" stroke-width="1" stroke-linejoin="round"/><path d="M6.6 6.9 L12.1 4.2 V8.9 L6.6 11.8 Z" fill="#eecb72"/><path d="M6.6 6.9 L1.1 4.2 V8.9 L6.6 11.8 Z" fill="#f3e0ad"/><path d="M6.6 1.2 L12 4 L6.6 6.8 L1.2 4 Z" fill="#f8efd6"/><path d="M4.6 2.6 L9 4.9 L7.6 5.7 L3.2 3.4 Z" fill="#fffdf6"/><path d="M6.6 6.9 V11.8 M1.2 4.1 L6.6 6.9 L12 4.1" fill="none" stroke="#e3c27c" stroke-width=".5"/></svg><div class="a" style="left:16px;top:0;width:1px;height:100%;background:#cfcfcf"></div><div class="a" style="left:57px;top:0;width:1px;height:100%;background:#cfcfcf"></div><svg class="a" style="left:32px;top:5.1px" width="10" height="10" viewBox="0 0 10 10"><rect width="10" height="10" rx="1.6" fill="#4985d6"/><path d="M1.8 5.2 L4 7.4 L8.2 2.2" fill="none" stroke="#fff" stroke-width="1.3"/></svg><span class="a t11" style="left:59.6px;top:3.1px;line-height:13px;color:#454545">Uninstaller</span></div>
<div class="a row" style="top:460.92px;background:#e4e4e4"><svg class="a" style="left:2px;top:3.4px" width="13.2" height="13" viewBox="0 0 13.2 13"><path d="M6.6 .6 L12.6 3.8 V9.2 L6.6 12.4 L.6 9.2 V3.8 Z" fill="#f4e5bc" stroke="#d3ad62" stroke-width="1" stroke-linejoin="round"/><path d="M6.6 6.9 L12.1 4.2 V8.9 L6.6 11.8 Z" fill="#eecb72"/><path d="M6.6 6.9 L1.1 4.2 V8.9 L6.6 11.8 Z" fill="#f3e0ad"/><path d="M6.6 1.2 L12 4 L6.6 6.8 L1.2 4 Z" fill="#f8efd6"/><path d="M4.6 2.6 L9 4.9 L7.6 5.7 L3.2 3.4 Z" fill="#fffdf6"/><path d="M6.6 6.9 V11.8 M1.2 4.1 L6.6 6.9 L12 4.1" fill="none" stroke="#e3c27c" stroke-width=".5"/></svg><div class="a" style="left:16px;top:0;width:1px;height:100%;background:#cfcfcf"></div><div class="a" style="left:57px;top:0;width:1px;height:100%;background:#cfcfcf"></div><svg class="a" style="left:32px;top:5.1px" width="10" height="10" viewBox="0 0 10 10"><rect width="10" height="10" rx="1.6" fill="#4985d6"/><path d="M1.8 5.2 L4 7.4 L8.2 2.2" fill="none" stroke="#fff" stroke-width="1.3"/></svg><span class="a t11" style="left:59.6px;top:3.1px;line-height:13px;color:#454545">Update Lansweeper</span><div class="a" style="left:276px;top:0;width:1px;height:100%;background:#cfcfcf"></div><div class="a" style="left:293.4px;top:0;width:1px;height:100%;background:#cfcfcf"></div><svg class="a" style="left:279px;top:3.2px" width="13.4" height="13" viewBox="0 0 13.4 13"><path d="M3.6 1.8 V.6 H12.6 V9.4 H10.4" fill="none" stroke="#4460ad" stroke-width="1"/><path d="M.6 2.4 H7.2 L9.8 5 V12.2 H.6 Z" fill="#d9e6f8" stroke="#4460ad" stroke-width="1" stroke-linejoin="round"/><path d="M7 2.6 V5.2 H9.6" fill="none" stroke="#4460ad" stroke-width=".8"/><path d="M2.2 5 H5.4 M2.2 7 H8 M2.2 9 H8" stroke="#8aa5d8" stroke-width=".8"/></svg><svg class="a" style="left:297px;top:4.6px" width="11.4" height="11.4" viewBox="0 0 12 12"><circle cx="6" cy="6" r="5.5" fill="url(#gr)" stroke="#d4595c" stroke-width=".7"/><rect x="2.9" y="5" width="6.2" height="2" rx=".4" fill="#fbeaea"/></svg></div>
<!-- right panel -->
<div class="a" style="left:349px;top:146px;width:1px;height:398px;background:#c6c6c6"></div>
<div class="a" style="left:350px;top:163px;width:567px;height:1px;background:#cdcdcd"></div>
<div class="a inpd" style="left:420px;top:194px;width:495px;height:18.5px"></div>
<span class="a t10d" id="r1" style="right:325.8px;top:198.8px">Change Registered Owner/Organisation</span>
<div class="a inpd" style="left:420px;top:244px;width:495px;height:69.5px"></div>
<span class="a t10d" id="r2" style="right:22.6px;top:248.5px">Package to change the registered <span id="r3">owner and organization. Remark: The client will be rescanned after to</span></span>
<div class="a" style="left:362px;top:348px;width:553px;height:97px;border:1px solid #c2c2c2;border-radius:3px"></div>
<!-- steps table -->
<div class="a" style="left:372px;top:382px;width:534px;height:54px;background:#eaeaea;box-shadow:1px 1px 4px rgba(0,0,0,.55)"></div>
<div class="a" style="left:372px;top:382px;width:534px;height:17.5px;background:linear-gradient(#e5e5e5,#dadada)"></div>
<div class="a" style="left:372px;top:418px;width:534px;height:18px;background:#dfdfdf"></div>
<div class="a vs" style="left:635px"></div><div class="a vs" style="left:686px"></div><div class="a vs" style="left:763px"></div><div class="a vs" style="left:829.5px"></div><div class="a vs" style="left:866px"></div><div class="a vs" style="left:885px"></div>
<span class="a th" style="left:637px">Type</span><span class="a th" style="left:688.5px">Success action</span><span class="a th" style="left:765.7px">Fail action</span>
<span class="a td" style="left:637px;top:402px">Command</span><span class="a td" style="left:688.5px;top:402px">Step 2</span><span class="a td" style="left:766px;top:402px;color:#d5333f">Stop (Failure)</span>
<span class="a td" style="left:637px;top:420px">Command</span><span class="a td" style="left:688.5px;top:420px;color:#3cab4b">Stop (Success)</span><span class="a td" style="left:766px;top:420px;color:#d5333f">Stop (Failure)</span>

<svg class="a" style="left:834px;top:403.5px" width="6.8" height="10.8" viewBox="0 0 6.8 10.8"><path d="M3.4 .5 L6.3 4.2 H4.5 V10.3 H2.3 V4.2 H.5 Z" fill="url(#gg)" stroke="#58a85c" stroke-width=".7" stroke-linejoin="round"/></svg><svg class="a" style="left:848px;top:403.5px" width="6.8" height="10.8" viewBox="0 0 6.8 10.8"><path d="M3.4 10.3 L6.3 6.6 H4.5 V.5 H2.3 V6.6 H.5 Z" fill="url(#gg)" stroke="#58a85c" stroke-width=".7" stroke-linejoin="round"/></svg><svg class="a" style="left:868.4px;top:403.7px" width="13" height="11.4" viewBox="0 0 13 11.4"><path d="M3 .6 H9.8 V10.8 H.6 V3 Z" fill="#f4f4f4" stroke="#a9a9a9" stroke-width=".8" stroke-linejoin="round"/><path d="M3 .6 V3 H.6" fill="none" stroke="#a9a9a9" stroke-width=".7"/><path d="M4.6 8.6 L5.4 6.3 L10.2 1.6 L12.4 3.7 L7.4 8.3 Z" fill="#e8a94a" stroke="#b98235" stroke-width=".5" stroke-linejoin="round"/><path d="M4.6 8.6 L5.4 6.3 L6.9 7.8 Z" fill="#3d3326"/></svg><svg class="a" style="left:888.8px;top:403.5px" width="11.4" height="11.4" viewBox="0 0 12 12"><circle cx="6" cy="6" r="5.5" fill="url(#gr)" stroke="#d4595c" stroke-width=".7"/><rect x="2.9" y="5" width="6.2" height="2" rx=".4" fill="#fbeaea"/></svg><svg class="a" style="left:834px;top:420.8px" width="6.8" height="10.8" viewBox="0 0 6.8 10.8"><path d="M3.4 .5 L6.3 4.2 H4.5 V10.3 H2.3 V4.2 H.5 Z" fill="url(#gg)" stroke="#58a85c" stroke-width=".7" stroke-linejoin="round"/></svg><svg class="a" style="left:848px;top:420.8px" width="6.8" height="10.8" viewBox="0 0 6.8 10.8"><path d="M3.4 10.3 L6.3 6.6 H4.5 V.5 H2.3 V6.6 H.5 Z" fill="url(#gg)" stroke="#58a85c" stroke-width=".7" stroke-linejoin="round"/></svg><svg class="a" style="left:868.4px;top:421.0px" width="13" height="11.4" viewBox="0 0 13 11.4"><path d="M3 .6 H9.8 V10.8 H.6 V3 Z" fill="#f4f4f4" stroke="#a9a9a9" stroke-width=".8" stroke-linejoin="round"/><path d="M3 .6 V3 H.6" fill="none" stroke="#a9a9a9" stroke-width=".7"/><path d="M4.6 8.6 L5.4 6.3 L10.2 1.6 L12.4 3.7 L7.4 8.3 Z" fill="#e8a94a" stroke="#b98235" stroke-width=".5" stroke-linejoin="round"/><path d="M4.6 8.6 L5.4 6.3 L6.9 7.8 Z" fill="#3d3326"/></svg><svg class="a" style="left:888.8px;top:420.8px" width="11.4" height="11.4" viewBox="0 0 12 12"><circle cx="6" cy="6" r="5.5" fill="url(#gr)" stroke="#d4595c" stroke-width=".7"/><rect x="2.9" y="5" width="6.2" height="2" rx=".4" fill="#fbeaea"/></svg>
<span class="a" id="dpo" style="left:363px;top:457.6px;font-size:9.65px;font-weight:bold;color:#1c1c1c;line-height:12px">Deployment package options</span>
<span class="a td" style="left:363px;top:482.5px">Maximum duration per asset</span>
<div class="a num" style="left:515.3px;top:479px"></div><span class="a td" style="left:520px;top:482.2px;color:#3a3a3a;font-size:10.4px">0</span>
<span class="a td" style="left:557.5px;top:481.5px">hour(s)</span>
<div class="a num" style="left:602.4px;top:479px"></div><span class="a td" style="left:607px;top:482.2px;color:#3a3a3a;font-size:10.4px">2</span>
<span class="a td" style="left:644.6px;top:481.5px">minute(s)</span>
<svg class="a" style="left:692.3px;top:482.6px" width="11.4" height="11" viewBox="0 0 12 11"><path d="M6 .8 L11.4 10.3 H.6 Z" fill="#f3cf4e" stroke="#a5832a" stroke-width=".8" stroke-linejoin="round"/><rect x="5.4" y="3.6" width="1.2" height="3.6" fill="#222"/><rect x="5.4" y="8" width="1.2" height="1.2" fill="#222"/></svg>
<span class="a td" style="left:363px;top:509.5px">Final action</span>
<div class="a cb" style="left:518px;top:510.5px"></div><span class="a td" style="left:533.6px;top:509.5px">Shutdown</span>
<div class="a cb" style="left:582.3px;top:510.5px"></div><span class="a td" style="left:597px;top:509.5px">Reboot</span>
<span class="a td" style="left:634px;top:509.5px;font-weight:bold;font-style:italic;color:#333">after</span>
<div class="a num dis" style="left:662.4px;top:507.2px"></div><span class="a td" style="left:667px;top:509.8px;color:#b8b8b8;font-size:10.4px">0</span>
<span class="a td" style="left:704px;top:509.5px;font-style:italic">hour(s)</span>
<div class="a num dis" style="left:741.6px;top:507.2px"></div><span class="a td" style="left:746px;top:509.8px;color:#b8b8b8;font-size:10.4px">0</span>
<span class="a td" style="left:783.6px;top:509.5px;font-style:italic">minute(s)</span>
<div class="a num dis" style="left:830.7px;top:507.2px"></div><span class="a td" style="left:835px;top:509.8px;color:#b8b8b8;font-size:10.4px">0</span>
<span class="a td" style="left:872.8px;top:509.5px;font-style:italic">second(s)</span>
<span class="a td" style="left:363px;top:534.5px">Rescan assets</span>
<svg class="a" style="left:518px;top:536.6px" width="10" height="10" viewBox="0 0 10 10"><rect width="10" height="10" rx="1.6" fill="#4985d6"/><path d="M1.8 5.2 L4 7.4 L8.2 2.2" fill="none" stroke="#fff" stroke-width="1.3"/></svg>

<!-- ===== dialog ===== -->
<div class="a" id="shadow"></div>
<div class="a" id="dlg">
  <div class="a" id="dtitle"></div>
  <span class="a" id="dt" style="left:5.6px;top:5.8px;font-size:10.6px;font-weight:bold;color:#fff;line-height:14px">Edit Step</span>
  <svg class="a" style="left:437.6px;top:10.7px" width="7.6" height="7.6" viewBox="0 0 8 8"><path d="M1.2 1.2 L6.8 6.8 M6.8 1.2 L1.2 6.8" stroke="#e3ecfa" stroke-width="2"/></svg>
  <span class="a lbl" id="l1" style="left:28.9px;top:65.89px">Action</span>
  <div class="a sel" style="left:125.2px;top:66.4px;width:82.6px;height:16.4px"></div>
  <span class="a st" id="s1" style="left:128.8px;top:68.69px">Command</span>
  <svg class="a" style="left:197px;top:73.2px" width="6.4" height="4.4" viewBox="0 0 6.4 4.4"><path d="M.7 .8 L3.2 3.3 L5.7 .8" fill="none" stroke="#2a2a2a" stroke-width="1.05"/></svg>
  <div class="a" style="left:28.2px;top:96px;width:396.2px;height:1px;background:#c8c8c8"></div>
  <span class="a lbl" id="l2" style="left:28.9px;top:116.69px">Step name</span>
  <div class="a inp" style="left:126.2px;top:117.2px;width:297.6px;height:16.6px"></div>
  <span class="a it" id="i1" style="left:132.9px;top:120.09px">Change Owner</span>
  <span class="a lbl" id="l3" style="left:28.9px;top:142.79px">Command</span>
  <div class="a inp" style="left:126.2px;top:144.3px;width:297.6px;height:100.4px"></div>
  <span class="a it" id="i2" style="left:132.9px;top:147.29px">REG ADD "HKLM\SOFTWARE\Microsoft\Windows</span>
  <span class="a it" id="i3" style="left:132.9px;top:159.39px">NT\CurrentVersion" /v RegisteredOwner /t REG_SZ /d</span>
  <span class="a it" id="i4" style="left:132.9px;top:171.49px">"LanSweeperUser" /f</span>
  <span class="a lbl" id="l4" style="left:28.9px;top:254.79px">Success codes</span>
  <div class="a inp" style="left:126.2px;top:255.4px;width:297.6px;height:16.5px"></div>
  <span class="a it" id="i5" style="left:132.9px;top:257.09px">0,1641,3010</span>
  <span class="a lbl" id="l5" style="left:28.9px;top:280.59px">Action on success</span>
  <div class="a sel" style="left:126.2px;top:281px;width:297.6px;height:16.7px"></div>
  <span class="a st" id="s2" style="left:129.7px;top:282.69px">Change Organisation</span>
  <svg class="a" style="left:412.8px;top:287.6px" width="6.4" height="4.4" viewBox="0 0 6.4 4.4"><path d="M.7 .8 L3.2 3.3 L5.7 .8" fill="none" stroke="#2a2a2a" stroke-width="1.05"/></svg>
  <span class="a lbl" id="l6" style="left:28.9px;top:306.69px">Action on failure</span>
  <div class="a sel" style="left:126.2px;top:307.3px;width:297.6px;height:16.4px"></div>
  <span class="a st" id="s3" style="left:129.7px;top:308.69px">Stop (Failure)</span>
  <svg class="a" style="left:412.8px;top:313.6px" width="6.4" height="4.4" viewBox="0 0 6.4 4.4"><path d="M.7 .8 L3.2 3.3 L5.7 .8" fill="none" stroke="#2a2a2a" stroke-width="1.05"/></svg>
  <div class="a" style="left:0;top:352.6px;width:453px;height:1px;background:#9a9a9a"></div>
  <div class="a btn" style="left:334px;top:357.2px;width:40px"><span id="bk">Ok</span></div>
  <div class="a btn" style="left:380px;top:357.2px;width:60px"><span id="bc">Cancel</span></div>
</div>
</div>
</body>
</html>
